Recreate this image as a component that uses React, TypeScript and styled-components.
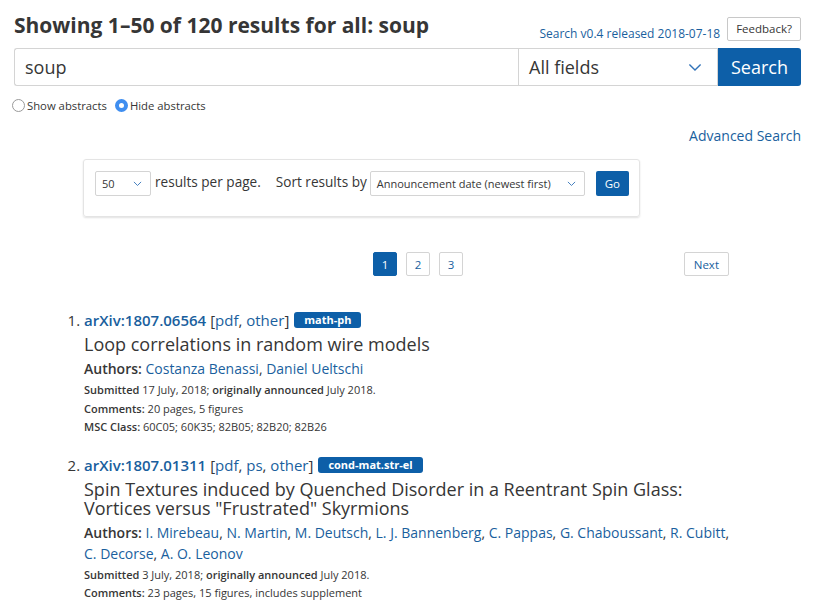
import React from "react";
import styled, { createGlobalStyle } from "styled-components";

const blue = "#1a5f9e";
const btnBlue = "#0d5fa8";
const text = "#363636";

const GlobalStyle = createGlobalStyle`
    html, body {
        margin: 0;
        padding: 0;
        background: #fff;
        font-family: "Open Sans", "Noto Sans", sans-serif;
        color: ${text};
    }
    a {
        color: ${blue};
        text-decoration: none;
    }
`;

const Page = styled.div`
    padding: 0 12px 0 14px;
`;

const TopRow = styled.div`
    display: flex;
    align-items: flex-end;
    justify-content: space-between;
    padding-top: 8px;
    height: 40px;
    box-sizing: border-box;
`;

const Heading = styled.h1`
    margin: 0;
    font-size: 21px;
    font-weight: 700;
    line-height: 30px;
    color: ${text};
`;

const Meta = styled.div`
    display: flex;
    align-items: center;
    gap: 7px;
    margin-bottom: -2px;
`;

const Release = styled.a`
    font-size: 12px;
    padding-top: 10px;
`;

const Feedback = styled.button`
    font-family: inherit;
    font-size: 11.5px;
    color: ${text};
    background: #fff;
    border: 1px solid #c8c8c8;
    border-radius: 2px;
    height: 24px;
    padding: 0 8px;
`;

const SearchBar = styled.div`
    display: flex;
    height: 38px;
    margin-top: 8px;
`;

const QueryInput = styled.div`
    flex: 1;
    display: flex;
    align-items: center;
    padding: 0 10px;
    border: 1px solid #d4d4d4;
    border-right: none;
    border-radius: 3px 0 0 3px;
    font-size: 18px;
    color: ${text};
`;

const FieldSelect = styled.div`
    width: 200px;
    display: flex;
    align-items: center;
    justify-content: space-between;
    padding: 0 15px 0 10px;
    box-sizing: border-box;
    border: 1px solid #d4d4d4;
    font-size: 18px;
    color: ${text};
`;

const SearchButton = styled.button`
    width: 83px;
    background: ${btnBlue};
    color: #fff;
    border: none;
    border-radius: 0 3px 3px 0;
    font-family: inherit;
    font-size: 18px;
`;

const Radios = styled.div`
    display: flex;
    align-items: center;
    gap: 8px;
    margin-top: 12px;
    margin-left: -2px;
    font-size: 11.3px;
`;

const RadioLabel = styled.label`
    display: flex;
    align-items: center;
    gap: 2px;
`;

const RadioDot = styled.span<{ checked?: boolean }>`
    width: 13px;
    height: 13px;
    border-radius: 50%;
    box-sizing: border-box;
    border: ${p => (p.checked ? "4px solid #3f8ef0" : "1px solid #9a9a9a")};
    background: #fff;
`;

const AdvRow = styled.div`
    display: flex;
    justify-content: flex-end;
    margin-top: 13px;
    font-size: 14px;
    line-height: 20px;
`;

const SortBox = styled.div`
    margin: 13px 0 0 69px;
    width: 557px;
    height: 58px;
    box-sizing: border-box;
    border: 1px solid #e4e4e4;
    border-radius: 3px;
    box-shadow: 0 1px 2px rgba(0, 0, 0, 0.12);
    display: flex;
    align-items: flex-start;
    padding: 11px 11px 0;
    font-size: 13.6px;
    white-space: nowrap;
`;

const SmallSelect = styled.div<{ w: number }>`
    flex-shrink: 0;
    width: ${p => p.w}px;
    height: 25px;
    box-sizing: border-box;
    border: 1px solid #d4d4d4;
    border-radius: 2px;
    display: flex;
    align-items: center;
    justify-content: space-between;
    padding: 0 8px 0 6px;
    font-size: 11px;
    color: ${text};
`;

const BoxText = styled.span<{ left: number }>`
    flex-shrink: 0;
    line-height: 22px;
    margin: 0 3px 0 ${p => p.left}px;
`;

const GoButton = styled.button`
    flex-shrink: 0;
    margin-left: 11px;
    height: 25px;
    width: 33px;
    background: ${btnBlue};
    color: #fff;
    border: none;
    border-radius: 2px;
    font-family: inherit;
    font-size: 11.5px;
`;

const Pager = styled.div`
    display: flex;
    align-items: center;
    margin: 35px 0 0 359px;
    width: 356px;
`;

const PageList = styled.div`
    display: flex;
    gap: 9px;
    flex: 1;
`;

const PageBtn = styled.a<{ current?: boolean; wide?: boolean }>`
    display: flex;
    align-items: center;
    justify-content: center;
    width: ${p => (p.wide ? "auto" : "24px")};
    height: 24px;
    box-sizing: border-box;
    padding: ${p => (p.wide ? "0 9px" : "0")};
    border-radius: 2px;
    font-size: 11.5px;
    border: 1px solid ${p => (p.current ? btnBlue : "#d4d4d4")};
    background: ${p => (p.current ? btnBlue : "#fff")};
    color: ${p => (p.current ? "#fff" : blue)};
`;

const Results = styled.ol`
    margin: 34px 0 0;
    padding-left: 70px;
    font-size: 14px;
`;

const Item = styled.li`
    max-width: 655px;
    margin-bottom: 18px;
    &::marker {
        color: ${text};
        font-size: 15px;
    }
`;

const ListTitle = styled.div`
    display: flex;
    align-items: center;
    line-height: 20px;
    gap: 4px;
    font-size: 15px;
`;

const Id = styled.a`
    font-weight: 600;
`;

const Tag = styled.span`
    margin-left: 1px;
    background: ${btnBlue};
    color: #fff;
    font-size: 11px;
    font-weight: 700;
    border-radius: 3px;
    padding: 0 10px;
    line-height: 16px;
`;

const Title = styled.p`
    margin: 5px 0 0;
    font-size: 18px;
    line-height: 19px;
    font-weight: 500;
    color: ${text};
`;

const Authors = styled.p`
    margin: 4px 0 0;
    font-size: 14px;
    line-height: 21px;
`;

const Label = styled.span`
    font-weight: 600;
    color: ${text};
`;

const Small = styled.p<{ first?: boolean }>`
    margin: ${p => (p.first ? "2px" : "0")} 0 0;
    font-size: 11px;
    line-height: 18.5px;
    color: ${text};
`;

const Chevron = ({ size = 10 }: { size?: number }) => (
    <svg width={size} height={size * 0.6} viewBox="0 0 10 6" fill="none">
        <path d="M1 1l4 4 4-4" stroke="#3273b8" strokeWidth="1" />
    </svg>
);

type Result = {
    id: string;
    formats: string[];
    tag: string;
    title: string;
    authors: string[];
    submitted: string;
    comments: string;
    msc?: string;
};

const results: Result[] = [
    {
        id: "1807.06564",
        formats: ["pdf", "other"],
        tag: "math-ph",
        title: "Loop correlations in random wire models",
        authors: ["Costanza Benassi", "Daniel Ueltschi"],
        submitted: "17 July, 2018",
        comments: "20 pages, 5 figures",
        msc: "60C05; 60K35; 82B05; 82B20; 82B26",
    },
    {
        id: "1807.01311",
        formats: ["pdf", "ps", "other"],
        tag: "cond-mat.str-el",
        title: 'Spin Textures induced by Quenched Disorder in a Reentrant Spin Glass: Vortices versus "Frustrated" Skyrmions',
        authors: [
            "I. Mirebeau",
            "N. Martin",
            "M. Deutsch",
            "L. J. Bannenberg",
            "C. Pappas",
            "G. Chaboussant",
            "R. Cubitt",
            "C. Decorse",
            "A. O. Leonov",
        ],
        submitted: "3 July, 2018",
        comments: "23 pages, 15 figures, includes supplement",
    },
];

const App = (): React.ReactElement => (
    <Page>
        <GlobalStyle />
        <TopRow>
            <Heading>Showing 1–50 of 120 results for all: soup</Heading>
            <Meta>
                <Release href="#">Search v0.4 released 2018-07-18</Release>
                <Feedback>Feedback?</Feedback>
            </Meta>
        </TopRow>

        <SearchBar>
            <QueryInput>soup</QueryInput>
            <FieldSelect>
                All fields
                <Chevron size={14} />
            </FieldSelect>
            <SearchButton>Search</SearchButton>
        </SearchBar>

        <Radios>
            <RadioLabel>
                <RadioDot />
                Show abstracts
            </RadioLabel>
            <RadioLabel>
                <RadioDot checked />
                Hide abstracts
            </RadioLabel>
        </Radios>

        <AdvRow>
            <a href="#">Advanced Search</a>
        </AdvRow>

        <SortBox>
            <SmallSelect w={56}>
                50
                <Chevron size={9} />
            </SmallSelect>
            <BoxText left={4}>results per page.</BoxText>
            <BoxText left={12}>Sort results by</BoxText>
            <SmallSelect w={215}>
                Announcement date (newest first)
                <Chevron size={9} />
            </SmallSelect>
            <GoButton>Go</GoButton>
        </SortBox>

        <Pager>
            <PageList>
                <PageBtn current>1</PageBtn>
                <PageBtn>2</PageBtn>
                <PageBtn>3</PageBtn>
            </PageList>
            <PageBtn wide>Next</PageBtn>
        </Pager>

        <Results>
            {results.map(r => (
                <Item key={r.id}>
                    <ListTitle>
                        <Id href="#">arXiv:{r.id}</Id>
                        <span>
                            [
                            {r.formats.map((f, i) => (
                                <React.Fragment key={f}>
                                    {i > 0 && ", "}
                                    <a href="#">{f}</a>
                                </React.Fragment>
                            ))}
                            ]
                        </span>
                        <Tag>{r.tag}</Tag>
                    </ListTitle>
                    <Title>{r.title}</Title>
                    <Authors>
                        <Label>Authors: </Label>
                        {r.authors.map((a, i) => (
                            <React.Fragment key={a}>
                                {i > 0 && ", "}
                                <a href="#">{a}</a>
                            </React.Fragment>
                        ))}
                    </Authors>
                    <Small first>
                        <Label>Submitted</Label> {r.submitted};{" "}
                        <Label>originally announced</Label> July 2018.
                    </Small>
                    <Small>
                        <Label>Comments:</Label> {r.comments}
                    </Small>
                    {r.msc && (
                        <Small>
                            <Label>MSC Class:</Label> {r.msc}
                        </Small>
                    )}
                </Item>
            ))}
        </Results>
    </Page>
);

export default App;
